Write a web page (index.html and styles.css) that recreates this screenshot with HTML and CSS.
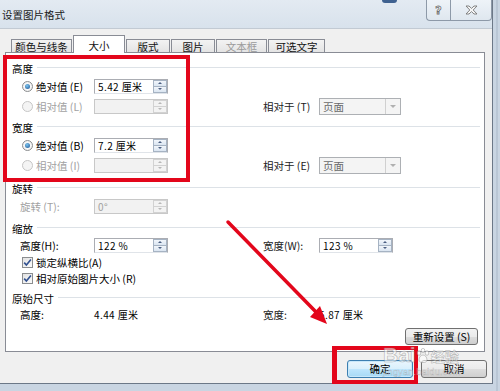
FILE: index.html
```html
<!DOCTYPE html>
<html lang="zh-CN">
<head>
  <meta charset="UTF-8" />
  <title>设置图片格式</title>
  <link rel="stylesheet" href="styles.css">
</head>
<body>
<div class="screen">
  <div class="dlg">
    <div class="titlebar">
      <span class="title">设置图片格式</span>
      <span class="blip"></span>
      <div class="capbtns">
        <span class="capbtn help">?</span>
        <span class="capbtn close">
          <svg width="13" height="10" viewBox="0 0 13 10"><path d="M1 1h3l2.5 2.4L9 1h3L8.2 5 12 9H9L6.5 6.6 4 9H1l3.8-4z" fill="#f6f6f6" stroke="#777" stroke-width="0.9"/></svg>
        </span>
      </div>
    </div>

    <div class="tabs">
      <span class="tab w1">颜色与线条</span>
      <span class="tab w2 on">大小</span>
      <span class="tab w3">版式</span>
      <span class="tab w3">图片</span>
      <span class="tab w5 off">文本框</span>
      <span class="tab w6">可选文字</span>
    </div>

    <div class="panel">
      <!-- 高度 -->
      <div class="sec">
        <div class="sec-h"><span>高度</span><i></i></div>
        <div class="row">
          <label class="opt"><span class="radio on"></span>绝对值 (E)</label>
          <span class="spin"><span class="val">5.42 厘米</span><span class="arrows"><b class="up"></b><b class="dn"></b></span></span>
        </div>
        <div class="row">
          <label class="opt dim"><span class="radio"></span>相对值 (L)</label>
          <span class="spin off"><span class="val"></span><span class="arrows"><b class="up"></b><b class="dn"></b></span></span>
          <span class="rl">相对于 (T)</span>
          <span class="combo"><span class="val">页面</span><span class="drop"></span></span>
        </div>
      </div>

      <!-- 宽度 -->
      <div class="sec s2">
        <div class="sec-h"><span>宽度</span><i></i></div>
        <div class="row">
          <label class="opt"><span class="radio on"></span>绝对值 (B)</label>
          <span class="spin"><span class="val">7.2 厘米</span><span class="arrows"><b class="up"></b><b class="dn"></b></span></span>
        </div>
        <div class="row">
          <label class="opt dim"><span class="radio"></span>相对值 (I)</label>
          <span class="spin off"><span class="val"></span><span class="arrows"><b class="up"></b><b class="dn"></b></span></span>
          <span class="rl">相对于 (E)</span>
          <span class="combo"><span class="val">页面</span><span class="drop"></span></span>
        </div>
      </div>

      <!-- 旋转 -->
      <div class="sec s3">
        <div class="sec-h"><span>旋转</span><i></i></div>
        <div class="row">
          <span class="lbl dim">旋转 (T):</span>
          <span class="spin off"><span class="val">0°</span><span class="arrows"><b class="up"></b><b class="dn"></b></span></span>
        </div>
      </div>

      <!-- 缩放 -->
      <div class="sec s4">
        <div class="sec-h"><span>缩放</span><i></i></div>
        <div class="row r18">
          <span class="lbl">高度(H):</span>
          <span class="spin"><span class="val">122 %</span><span class="arrows"><b class="up"></b><b class="dn"></b></span></span>
          <span class="rl">宽度(W):</span>
          <span class="spin"><span class="val">123 %</span><span class="arrows"><b class="up"></b><b class="dn"></b></span></span>
        </div>
        <label class="chkrow"><span class="chk"><svg width="9" height="9" viewBox="0 0 9 9"><path d="M1.2 4.6l2.2 2.5L7.9 1.5" fill="none" stroke="#31508f" stroke-width="1.6"/></svg></span>锁定纵横比(A)</label>
        <label class="chkrow"><span class="chk"><svg width="9" height="9" viewBox="0 0 9 9"><path d="M1.2 4.6l2.2 2.5L7.9 1.5" fill="none" stroke="#31508f" stroke-width="1.6"/></svg></span>相对原始图片大小 (R)</label>
      </div>

      <!-- 原始尺寸 -->
      <div class="sec s4">
        <div class="sec-h"><span>原始尺寸</span><i></i></div>
        <div class="row r16">
          <span class="lbl">高度:</span>
          <span class="num">4.44 厘米</span>
          <span class="rl">宽度:</span>
          <span class="num">5.87 厘米</span>
        </div>
      </div>

      <div class="resetrow"><button class="btn reset">重新设置 (S)</button></div>
    </div>

    <div class="footer">
      <button class="btn ok">确定</button>
      <button class="btn">取消</button>
    </div>
  </div>

  <!-- 标注 -->
  <div class="mark m1"></div>
  <div class="mark m2"></div>
  <svg class="arrow" width="500" height="391" viewBox="0 0 500 391">
    <line x1="228" y1="222" x2="316" y2="312" stroke="#e3061b" stroke-width="3.5" stroke-linecap="round"/>
    <polygon points="327,324 310,317 320,306" fill="#e3061b"/>
  </svg>
  <div class="wm">
    <span class="wm-bai">Bai</span><svg class="paw" width="14" height="16" viewBox="0 0 14 16"><g fill="rgba(255,255,255,.6)" stroke="rgba(110,110,110,.45)" stroke-width=".8"><ellipse cx="3" cy="5" rx="1.8" ry="2.3"/><ellipse cx="7" cy="2.6" rx="1.8" ry="2.2"/><ellipse cx="11" cy="5" rx="1.8" ry="2.3"/><path d="M3 12c0-3 2-5 4-5s4 2 4 5c0 2-2 2.5-4 2.5S3 14 3 12z"/></g></svg><span class="wm-jy">经验</span>
    <div class="wm-url">jingyan.baidu.com</div>
  </div>
</div>
</body>
</html>
```

FILE: styles.css
```css
*{box-sizing:border-box;}
html,body{margin:0;padding:0;}
body{width:500px;height:391px;overflow:hidden;background:#c9d5e2;font-family:"Noto Sans CJK SC","Noto Sans",sans-serif;font-size:10.5px;color:#000;}
.screen{position:relative;width:500px;height:391px;background:linear-gradient(90deg,#c9d5e2 0,#c9d5e2 496px,#aab8c8 497px,#c9d5e2 498px);}

.dlg{width:493px;height:384px;background:#f0f0f0;border-right:1px solid #6c7887;border-bottom:1px solid #6c7887;display:flex;flex-direction:column;}

/* 标题栏 */
.titlebar{position:relative;height:29px;flex:none;display:flex;align-items:flex-start;background:linear-gradient(#e3eaf2,#d8e2ec);border-bottom:1px solid #c2cad3;}
.title{padding:8px 0 0 2px;line-height:14px;color:#1a1a1a;}
.blip{position:absolute;left:382px;top:0;width:15px;height:3px;background:#3f6190;border-radius:0 0 3px 3px;}
.capbtns{margin-left:auto;display:flex;height:21px;}
.capbtn{display:flex;align-items:center;justify-content:center;height:21px;border:1px solid #8d99a8;border-top:none;background:linear-gradient(#eef3f8,#dfe7ef);}
.help{width:24px;border-right:none;border-radius:0 0 0 4px;font:bold 11px "DejaVu Sans",sans-serif;color:#fafafa;-webkit-text-stroke:.8px #707070;}
.close{width:42px;border-radius:0 0 4px 0;}

/* 选项卡 */
.tabs{height:23px;flex:none;display:flex;align-items:flex-end;gap:1px;padding-left:11px;position:relative;z-index:1;}
.tab{height:13px;border:1px solid #898c95;border-bottom:none;background:linear-gradient(#f3f3f3,#e4e4e4);text-align:center;line-height:11px;padding-top:1px;white-space:nowrap;color:#111;}
.tab.on{height:18px;margin-bottom:-1px;background:#fff;line-height:13px;padding-top:3px;}
.tab.off{color:#9a9a9a;}
.w1{width:61px;}
.w2{width:52px;}
.w3{width:44px;}
.w5{width:51px;}
.w6{width:57px;}

/* 主面板 */
.panel{height:300px;margin:0 7px 0 5px;flex:none;border:1px solid #898c95;background:#fff;padding:7px 4px 0 6px;}
.sec-h{display:flex;align-items:center;height:16px;}
.sec-h i{flex:1;height:1px;background:#dde2e7;margin-left:4px;margin-top:-1px;}
.s2{margin-top:3px;}
.s3{margin-top:5px;}
.s4{margin-top:4px;}

.row{display:grid;grid-template-columns:82px 169px 56px auto;align-items:center;height:20px;white-space:nowrap;}
.row.r18{height:18px;}
.row.r16{height:16px;}
.opt{display:flex;align-items:center;padding-left:10px;}
.lbl{padding-left:8px;}
.dim{color:#a2a2a2;}
.num{font-size:10px;letter-spacing:.4px;}

.radio{width:11px;height:11px;border-radius:50%;border:1px solid #8b8d8f;background:radial-gradient(circle,#fff 30%,#e3e3e3);margin-right:3px;display:flex;align-items:center;justify-content:center;}
.radio.on::after{content:"";width:5px;height:5px;border-radius:50%;background:radial-gradient(circle at 40% 35%,#7cc6f0,#1b4f8f);}
.dim .radio{border-color:#c6c6c6;background:#f4f4f4;}

.spin{display:flex;width:74px;height:15px;border:1px solid #abadb3;border-bottom-color:#e0e4e9;background:#fff;}
.spin .val{flex:1;padding-left:3px;line-height:13px;font-size:10px;letter-spacing:.4px;overflow:hidden;}
.arrows{width:14px;display:flex;flex-direction:column;}
.arrows b{flex:1;position:relative;border:1px solid #a6b3c3;background:linear-gradient(#f2f6fb,#dae5f1);}
.arrows b.dn{border-top:none;}
.arrows b::after{content:"";position:absolute;left:4px;top:1px;border-left:2px solid transparent;border-right:2px solid transparent;}
.arrows b.up::after{border-bottom:2px solid #4b5f82;}
.arrows b.dn::after{border-top:2px solid #4b5f82;top:1px;}
.spin.off{background:#f2f2f2;border-color:#c8c8c8;}
.spin.off .val{color:#a0a0a0;}
.spin.off .arrows b{border-color:#d2d2d2;background:#f3f3f3;}
.spin.off .arrows b::after{border-top-color:#b8b8b8;border-bottom-color:#b8b8b8;}

.rl{color:#222;}
.combo{display:flex;width:82px;height:17px;border:1px solid #adb0b4;background:#f4f4f4;}
.combo .val{flex:1;padding-left:3px;line-height:15px;color:#6a6a6a;}
.drop{width:15px;border-left:1px solid #d0d0d0;position:relative;}
.drop::after{content:"";position:absolute;left:4px;top:6px;border-left:3px solid transparent;border-right:3px solid transparent;border-top:3px solid #b0b0b0;}

.chkrow{display:flex;align-items:center;height:16px;padding-left:10px;white-space:nowrap;}
.chk{width:11px;height:11px;border:1px solid #8b8d8f;background:linear-gradient(135deg,#e2e2e2,#fbfbfb);margin-right:3px;display:flex;align-items:center;justify-content:center;}

/* 按钮 */
.btn{font-family:inherit;font-size:10.5px;color:#000;height:18px;padding:0;border:1px solid #707070;border-radius:3px;background:linear-gradient(#f2f2f2 0,#ebebeb 50%,#dddddd 51%,#cfcfcf 100%);line-height:14px;}
.resetrow{display:flex;justify-content:flex-end;margin-top:6px;padding-right:2px;}
.reset{width:73px;height:17px;}
.footer{display:flex;justify-content:flex-end;gap:8px;padding:8px 5px 0 0;}
.footer .btn{width:66px;}
.ok{border-color:#3c7fb1;background:linear-gradient(#eaf6fd 0,#d9f0fc 50%,#bee6fd 51%,#a7d9f5 100%);box-shadow:inset 0 0 0 1px #c8e8fa;}

/* 红色标注 */
.mark{position:absolute;border:4px solid #e3061b;}
.m1{left:3px;top:55px;width:187px;height:127px;}
.m2{left:332px;top:346px;width:86px;height:38px;border-width:4px 4px 4px 5px;}
.arrow{position:absolute;left:0;top:0;pointer-events:none;}

/* 水印 */
.wm{position:absolute;left:383px;top:343px;white-space:nowrap;pointer-events:none;}
.wm-bai{font:bold 21px "Liberation Sans",sans-serif;color:rgba(255,255,255,.55);-webkit-text-stroke:.7px rgba(110,110,110,.45);vertical-align:top;}
.paw{vertical-align:top;margin-top:5px;}
.wm-jy{font-size:14px;font-weight:bold;color:rgba(255,255,255,.55);-webkit-text-stroke:.6px rgba(110,110,110,.45);vertical-align:top;margin-left:1px;line-height:26px;}
.wm-url{font:9px "Liberation Sans",sans-serif;color:rgba(255,255,255,.5);-webkit-text-stroke:.4px rgba(110,110,110,.4);margin-top:-2px;letter-spacing:.3px;}
```
